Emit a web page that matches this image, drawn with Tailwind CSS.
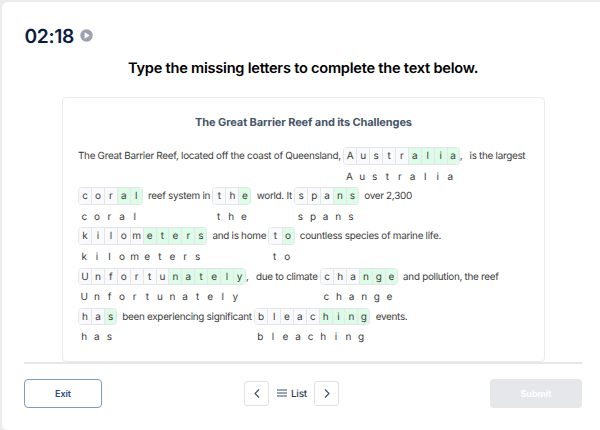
<!DOCTYPE html>
<html lang="en">
<head>
  <meta charset="UTF-8">
  <meta name="viewport" content="width=device-width, initial-scale=1.0">
  <title>Practice - Complete the Text</title>
  <script src="https://cdn.jsdelivr.net/npm/@tailwindcss/browser@4"></script>
</head>
<body class="h-[430px] overflow-hidden bg-[#ececed] pl-[2px] pt-[1.5px] font-['Inter','Liberation_Sans',sans-serif] antialiased [text-rendering:geometricPrecision]">

  <main class="h-full rounded-l-md bg-white pl-[22px] pr-[18px] pt-[24px] flex flex-col">

    <!-- Timer -->
    <div class="flex h-5 items-center gap-[6.5px]">
      <span class="w-[49.5px] whitespace-nowrap pl-[0.5px] text-[19.2px] leading-5 font-semibold tracking-[-0.35px] text-[#0b1d3f]">02:18</span>
      <svg class="size-[13px]" viewBox="0 0 24 24">
        <circle cx="12" cy="12" r="11.5" fill="#9ca3af" />
        <path d="M8.5 6v12l9.5-6z" fill="#fff" />
      </svg>
    </div>

    <h1 class="mt-3 h-5 text-center text-[14.6px] leading-5 font-semibold tracking-[-0.23px] text-black whitespace-nowrap">Type the missing letters to complete the text below.</h1>

    <!-- Passage -->
    <section class="mt-[19.5px] ml-[38px] h-[265px] w-[483px] shrink-0 rounded-[4px] border border-[#ebebee] px-[15px] pt-[16px]">
      <h2 class="text-center text-[11px] leading-4 font-bold tracking-[-0.1px] text-[#475569]">The Great Barrier Reef and its Challenges</h2>
      <div id="passage" class="mt-[17px] text-[10px] leading-[18.5px] text-[#3c3c3c]"></div>
    </section>

    <!-- Footer -->
    <footer class="flex h-[46px] shrink-0 items-end justify-between border-t-2 border-[#e5e7eb]">
      <button class="h-[29.5px] w-[78px] rounded-[4px] border border-[#7f9abd] text-[9px] font-semibold text-[#2b4a80]">Exit</button>
      <div class="mb-[2px] flex items-center pr-[9px]">
        <button class="flex h-[25.5px] w-[24.5px] items-center justify-center rounded-[3px] border border-[#e0e1e4]">
          <svg class="h-[9px] w-[6px]" viewBox="0 0 6 9" fill="none" stroke="#3b4d68" stroke-width="1.1"><path d="M5 .5 1 4.5l4 4" /></svg>
        </button>
        <div class="flex w-[45.5px] items-center justify-center gap-[4px] pl-[1px] text-[10px] leading-4 font-medium tracking-[-0.2px] text-[#2c3c57]">
          <svg class="h-[8px] w-[10px]" viewBox="0 0 10 8" stroke="#3b4d68" stroke-width="1"><path d="M0 1h10M0 4h10M0 7h10" /></svg>
          <span class="pt-[1px]">List</span>
        </div>
        <button class="flex h-[25.5px] w-[24.5px] items-center justify-center rounded-[3px] border border-[#e0e1e4]">
          <svg class="h-[9px] w-[6px]" viewBox="0 0 6 9" fill="none" stroke="#3b4d68" stroke-width="1.1"><path d="M1 .5 5 4.5l-4 4" /></svg>
        </button>
      </div>
      <button class="h-[29.5px] w-[92px] rounded-[4px] bg-[#e5e7eb] text-[9px] font-bold text-white">Submit</button>
    </footer>
  </main>

  <script>
    // Strings are plain text, pairs are [given letters, missing letters]
    const lines = [
      ["The Great Barrier Reef, located off the coast of Queensland,", ["Austr", "alia"], ",", "is the largest"],
      [["cor", "al"], "reef system in", ["th", "e"], "world. It", ["spa", "ns"], "over 2,300"],
      [["kilom", "eters"], "and is home", ["t", "o"], "countless species of marine life."],
      [["Unfortu", "nately"], ",", "due to climate", ["cha", "nge"], "and pollution, the reef"],
      [["ha", "s"], "been experiencing significant", ["bleac", "hing"], "events."],
    ];

    const cell = (letter, missing) =>
      `<span class="w-[12.9px] border-l border-[#e4e6e9] text-center first:border-l-0 ${missing ? "bg-[#dcfce7]" : "bg-[#f9fafb]"}">${letter}</span>`;

    function renderWord([given, missing]) {
      const cells = [...given].map((l) => cell(l, false)).join("") + [...missing].map((l) => cell(l, true)).join("");
      const answer = [...(given + missing)].map((l) => `<span class="w-[12.6px] text-center">${l}</span>`).join("");
      return `<span class="flex flex-col">
        <span class="flex h-[17.6px] overflow-hidden rounded-[3.5px] border border-[#e2e4e7] leading-[17.6px] *:first:w-[12.1px] *:last:w-[12.1px]">${cells}</span>
        <span class="flex pt-[3px]">${answer}</span>
      </span>`;
    }

    function renderText(text, prev) {
      if (text === ",") return `<span class="leading-[19.5px]">,</span>`;
      const gap = prev === "," ? "pl-[7px] pr-[2.5px]" : prev ? "pl-[5.2px] pr-[2.3px]" : "pr-[2.5px]";
      return `<span class="text-[9.9px] leading-[19.5px] tracking-[-0.285px] ${gap}">${text}</span>`;
    }

    document.getElementById("passage").innerHTML = lines
      .map((line) => {
        const parts = line.map((p, i) => (Array.isArray(p) ? renderWord(p) : renderText(p, line[i - 1])));
        return `<div class="flex h-[40.2px] whitespace-nowrap">${parts.join("")}</div>`;
      })
      .join("");
  </script>
</body>
</html>
